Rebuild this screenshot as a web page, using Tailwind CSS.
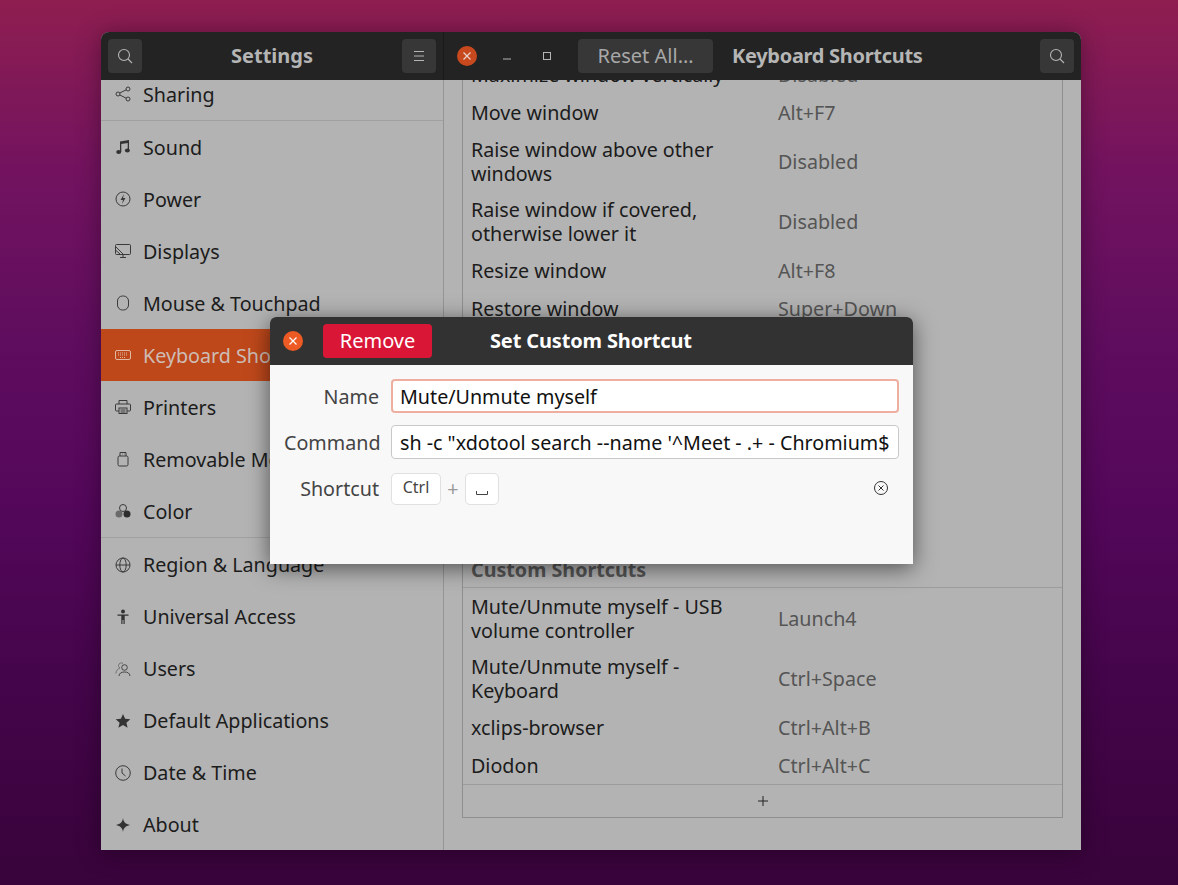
<!DOCTYPE html>
<html lang="en">
<head>
<meta charset="utf-8">
<title>Keyboard Shortcuts</title>
<script src="https://cdn.jsdelivr.net/npm/@tailwindcss/browser@4"></script>
</head>
<body class="m-0">
<div class="w-[1178px] h-[885px] overflow-hidden pt-[32px] pl-[101px] font-['Noto_Sans',sans-serif] text-[19.7px] leading-[24px] text-[#1c1c1c] bg-[linear-gradient(180deg,#8e1e50_0%,#73135f_19%,#5f0d5e_38%,#54075a_57%,#44054a_77%,#38033a_100%)]">
  <div class="relative w-[980px] h-[818px] rounded-t-[8px] flex flex-col bg-[#b3b3b3] shadow-[0_2px_24px_rgba(0,0,0,0.35)]">
    <!-- Header -->
    <header class="h-[48px] shrink-0 flex bg-[#232323] text-[#b5b5b5] z-10 rounded-t-[8px]">
      <div class="w-[343px] shrink-0 flex items-center justify-between px-[7px] border-r border-[#1a1a1a]">
        <button class="w-[34px] h-[34px] rounded-[4px] bg-[#373737] flex items-center justify-center">
          <svg width="16" height="16" viewBox="0 0 16 16" fill="none" stroke="#b5b5b5" stroke-width="1.1"><circle cx="7" cy="7" r="5.5"/><path d="M11 11l4 4"/></svg>
        </button>
        <span class="font-bold text-[20px]">Settings</span>
        <button class="w-[34px] h-[34px] rounded-[4px] bg-[#373737] flex items-center justify-center">
          <svg width="12" height="12" viewBox="0 0 12 12" stroke="#b5b5b5" stroke-width="1"><path d="M1 1.5h10M1 6h10M1 10.5h10"/></svg>
        </button>
      </div>
      <div class="flex-1 flex items-center pl-[13px] pr-[7px]">
        <span class="w-[20px] h-[20px] rounded-full bg-[#c9491e] flex items-center justify-center">
          <svg width="10" height="10" viewBox="0 0 10 10" stroke="#e8d5cc" stroke-width="1.2"><path d="M1.5 1.5l7 7M8.500 1.500l-7 7"/></svg>
        </span>
        <svg class="ml-[25px]" width="10" height="10" viewBox="0 0 10 10" stroke="#b5b5b5" stroke-width="1"><path d="M1 8h8"/></svg>
        <svg class="ml-[30px]" width="10" height="10" viewBox="0 0 10 10" fill="none" stroke="#b5b5b5" stroke-width="1"><rect x="1.5" y="1.5" width="7" height="7"/></svg>
        <button class="ml-[26px] w-[135px] h-[34px] rounded-[4px] bg-[#373737] text-[#a8a8a8] text-[20px] flex items-center justify-center">Reset All…</button>
        <span class="ml-[19px] font-bold text-[20px] tracking-[-0.3px]">Keyboard Shortcuts</span>
        <button class="ml-auto w-[34px] h-[34px] rounded-[4px] bg-[#373737] flex items-center justify-center">
          <svg width="16" height="16" viewBox="0 0 16 16" fill="none" stroke="#b5b5b5" stroke-width="1.1"><circle cx="7" cy="7" r="5.5"/><path d="M11 11l4 4"/></svg>
        </button>
      </div>
    </header>

    <div class="flex-1 flex min-h-0 overflow-hidden">
      <!-- Sidebar -->
      <nav class="w-[343px] shrink-0 border-r border-[#959595] overflow-hidden">
        <div class="h-[41px] flex items-center gap-[12px] pl-[14px] border-b border-[#a0a0a0]">
          <svg class="shrink-0 mt-[-12px]" width="16" height="16" viewBox="0 0 16 16" fill="none" stroke="#3a3a3a" stroke-width="1"><circle cx="3" cy="8" r="2"/><circle cx="13" cy="3" r="2"/><circle cx="13" cy="13" r="2"/><path d="M4.800 7l6.400-3.200M4.800 9l6.400 3.200"/></svg>
          <span class="mt-[-10px]">Sharing</span>
        </div>
        <div class="h-[52px] flex items-center gap-[12px] pl-[14px]">
          <svg class="shrink-0" width="16" height="16" viewBox="0 0 16 16" fill="#333"><path d="M5 2.500l9-1.500v10.500h-1.300V4L6.300 5.100V13H5z"/><ellipse cx="3.700" cy="13" rx="2.500" ry="1.900"/><ellipse cx="12.400" cy="11.500" rx="2.500" ry="1.900"/></svg>
          <span class="mt-[2px]">Sound</span>
        </div>
        <div class="h-[52px] flex items-center gap-[12px] pl-[14px]">
          <svg class="shrink-0" width="16" height="16" viewBox="0 0 16 16" fill="none" stroke="#3a3a3a" stroke-width="1"><circle cx="8" cy="8" r="7"/><path fill="#3a3a3a" stroke="none" d="M9 3L5.500 9H8l-1 4 3.500-6H8z"/></svg>
          <span class="mt-[2px]">Power</span>
        </div>
        <div class="h-[52px] flex items-center gap-[12px] pl-[14px]">
          <svg class="shrink-0" width="16" height="16" viewBox="0 0 16 16" fill="none" stroke="#3a3a3a" stroke-width="1"><rect x="0.500" y="1.500" width="15" height="10" rx="1"/><path d="M5 14.500h6M8 11.500v3M1 4l7 7M1 7.500l4 3.500"/></svg>
          <span class="mt-[2px]">Displays</span>
        </div>
        <div class="h-[52px] flex items-center gap-[12px] pl-[14px]">
          <svg class="shrink-0" width="16" height="16" viewBox="0 0 16 16" fill="none" stroke="#3a3a3a" stroke-width="1"><rect x="2.500" y="1" width="11" height="14" rx="5"/></svg>
          <span class="mt-[2px]">Mouse &amp; Touchpad</span>
        </div>
        <div class="h-[52px] flex items-center gap-[12px] pl-[14px] bg-[#bf481b] text-[#cdbdb5]">
          <svg class="shrink-0" width="16" height="16" viewBox="0 0 16 16" fill="none" stroke="#e0b9a5" stroke-width="1"><rect x="0.500" y="3.500" width="15" height="9" rx="1.500"/><path d="M3 6h10M3 8h10M5 10.500h6" stroke-dasharray="1 1"/></svg>
          <span class="whitespace-nowrap mt-[2px]">Keyboard Shortcuts</span>
        </div>
        <div class="h-[52px] flex items-center gap-[12px] pl-[14px]">
          <svg class="shrink-0" width="16" height="16" viewBox="0 0 16 16" fill="none" stroke="#3a3a3a" stroke-width="1"><path d="M4 5V1.500h8V5M4 12H1.500A1 1 0 0 1 .5 11V6a1 1 0 0 1 1-1h13a1 1 0 0 1 1 1v5a1 1 0 0 1-1 1H12"/><rect x="4" y="9" width="8" height="5.500"/><path d="M5.500 11h5M5.500 13h5"/></svg>
          <span class="mt-[2px]">Printers</span>
        </div>
        <div class="h-[52px] flex items-center gap-[12px] pl-[14px]">
          <svg class="shrink-0" width="16" height="16" viewBox="0 0 16 16" fill="none" stroke="#3a3a3a" stroke-width="1"><rect x="3" y="5" width="10" height="10" rx="1.500"/><path d="M5 5V1.500h6V5M7 3h.5M9 3h.5"/></svg>
          <span class="whitespace-nowrap mt-[2px]">Removable Media</span>
        </div>
        <div class="h-[53px] flex items-center gap-[12px] pl-[14px] border-b border-[#a0a0a0]">
          <svg class="shrink-0" width="16" height="16" viewBox="0 0 16 16"><circle cx="8" cy="5" r="3.500" fill="none" stroke="#3a3a3a"/><circle cx="4" cy="11" r="3.500" fill="#6a6a6a"/><circle cx="12" cy="11" r="3.500" fill="#2c2c2c"/></svg>
          <span class="mt-[2px]">Color</span>
        </div>
        <div class="h-[53px] flex items-center gap-[12px] pl-[14px]">
          <svg class="shrink-0" width="16" height="16" viewBox="0 0 16 16" fill="none" stroke="#3a3a3a" stroke-width="1"><circle cx="8" cy="8" r="7"/><ellipse cx="8" cy="8" rx="3.200" ry="7"/><path d="M1 8h14"/></svg>
          <span>Region &amp; Language</span>
        </div>
        <div class="h-[52px] flex items-center gap-[12px] pl-[14px]">
          <svg class="shrink-0" width="16" height="16" viewBox="0 0 16 16" fill="#333"><circle cx="8" cy="2.500" r="2"/><path d="M2.500 5.500h11v1.300H9.700V15H8.500v-4h-1v4H6.300V6.800H2.500z"/></svg>
          <span>Universal Access</span>
        </div>
        <div class="h-[52px] flex items-center gap-[12px] pl-[14px]">
          <svg class="shrink-0" width="16" height="16" viewBox="0 0 16 16" fill="none" stroke="#3a3a3a" stroke-width="0.900"><circle cx="9.500" cy="6.500" r="2.800"/><path d="M4 15c.3-2.800 2.300-4 5.500-4s5.200 1.200 5.500 4"/><path d="M8 2.500A2.800 2.800 0 0 0 3.500 4.500c0 1 .5 2 1.500 2.500C2.800 7.800 1.200 9.500.8 12.500" stroke="#6a6a6a"/></svg>
          <span>Users</span>
        </div>
        <div class="h-[52px] flex items-center gap-[12px] pl-[14px]">
          <svg class="shrink-0" width="16" height="16" viewBox="0 0 16 16" fill="#333"><path d="M8 1l2.100 4.800 5.200.5-3.900 3.400 1.200 5.100L8 12.100l-4.600 2.700 1.200-5.100L.7 6.300l5.200-.5z"/></svg>
          <span>Default Applications</span>
        </div>
        <div class="h-[52px] flex items-center gap-[12px] pl-[14px]">
          <svg class="shrink-0" width="16" height="16" viewBox="0 0 16 16" fill="none" stroke="#3a3a3a" stroke-width="1"><circle cx="8" cy="8" r="7.300"/><path d="M7 3.500V8l3.500 3"/></svg>
          <span>Date &amp; Time</span>
        </div>
        <div class="h-[52px] flex items-center gap-[12px] pl-[14px]">
          <svg class="shrink-0" width="16" height="16" viewBox="0 0 16 16" fill="#333"><path d="M8 1c.6 4 2.500 6 7 7-4.500 1-6.400 3-7 7-.6-4-2.500-6-7-7 4.500-1 6.400-3 7-7z"/></svg>
          <span>About</span>
        </div>
      </nav>

      <!-- Content -->
      <main class="flex-1 min-w-0 px-[18px] pb-[32px]">
        <div class="h-full border-x border-b border-[#8f8f8f] flex flex-col overflow-hidden pl-[8px]">
          <div class="h-[14px] overflow-hidden shrink-0">
            <div class="flex mt-[-17px]"><span class="w-[307px] whitespace-nowrap">Maximize window vertically</span><span class="text-[#555]">Disabled</span></div>
          </div>
          <div class="h-[38px] flex items-center shrink-0"><span class="w-[307px]">Move window</span><span class="text-[#555]">Alt+F7</span></div>
          <div class="h-[60px] flex items-center shrink-0"><span class="w-[307px] pr-[30px]">Raise window above other windows</span><span class="text-[#555]">Disabled</span></div>
          <div class="h-[60px] flex items-center shrink-0"><span class="w-[307px] pr-[30px]">Raise window if covered, otherwise lower it</span><span class="text-[#555]">Disabled</span></div>
          <div class="h-[38px] flex items-center shrink-0"><span class="w-[307px]">Resize window</span><span class="text-[#555]">Alt+F8</span></div>
          <div class="h-[38px] flex items-center shrink-0"><span class="w-[307px]">Restore window</span><span class="text-[#555]">Super+Down</span></div>
          <div class="h-[228px] shrink-0"></div>
          <div class="h-[32px] shrink-0 -ml-[8px] pl-[8px] flex items-end pb-[5px] border-b border-[#9c9c9c] font-bold text-[#555]">Custom Shortcuts</div>
          <div class="h-[61px] flex items-center shrink-0 pt-[1px]"><span class="w-[307px] pr-[30px]">Mute/Unmute myself - USB volume controller</span><span class="text-[#555]">Launch4</span></div>
          <div class="h-[60px] flex items-center shrink-0"><span class="w-[307px] pr-[30px]">Mute/Unmute myself - Keyboard</span><span class="text-[#555]">Ctrl+Space</span></div>
          <div class="h-[38px] flex items-center shrink-0"><span class="w-[307px]">xclips-browser</span><span class="text-[#555]">Ctrl+Alt+B</span></div>
          <div class="h-[37px] flex items-center shrink-0 pt-[1px]"><span class="w-[307px]">Diodon</span><span class="text-[#555]">Ctrl+Alt+C</span></div>
          <div class="flex-1 -ml-[8px] border-t border-[#9c9c9c] flex items-center justify-center">
            <svg width="12" height="12" viewBox="0 0 12 12" stroke="#222" stroke-width="1"><path d="M6 1v10M1 6h10"/></svg>
          </div>
        </div>
      </main>
    </div>

    <!-- Dialog -->
    <section class="absolute left-[169px] top-[285px] w-[643px] h-[247px] z-20 rounded-t-[6px] overflow-hidden bg-[#f8f8f8] shadow-[0_4px_22px_rgba(0,0,0,0.55)] flex flex-col">
      <div class="h-[48px] shrink-0 bg-[#323232] flex items-center pl-[13px]">
        <span class="w-[20px] h-[20px] rounded-full bg-[#ed5a24] flex items-center justify-center">
          <svg width="10" height="10" viewBox="0 0 10 10" stroke="#fff" stroke-width="1.2"><path d="M1.500 1.500l7 7M8.500 1.500l-7 7"/></svg>
        </span>
        <button class="ml-[20px] w-[109px] h-[34px] rounded-[4px] bg-[#da1636] text-white text-[20px] flex items-center justify-center">Remove</button>
        <span class="ml-[58px] text-white font-bold text-[20px] tracking-[-0.15px]">Set Custom Shortcut</span>
      </div>
      <div class="flex-1 pt-[14px] pl-[14px] pr-[14px] text-[#444]">
        <div class="flex items-center h-[34px]">
          <span class="w-[95px] text-right whitespace-nowrap mt-[2px]">Name</span>
          <span class="ml-[12px] w-[508px] h-[34px] rounded-[4px] border-2 border-[#eeaea0] bg-white text-[#111] flex items-center pl-[7px] pt-[2px]">Mute/Unmute myself</span>
        </div>
        <div class="flex items-center h-[34px] mt-[12px]">
          <span class="w-[95px] text-right whitespace-nowrap mt-[2px]">Command</span>
          <span class="ml-[12px] w-[508px] h-[34px] rounded-[4px] border border-[#c8c8c8] bg-white text-[#111] flex items-center pl-[8px] pt-[2px] overflow-hidden whitespace-nowrap">sh -c "xdotool search --name '^Meet - .+ - Chromium$</span>
        </div>
        <div class="flex items-center h-[32px] mt-[14px]">
          <span class="w-[95px] text-right whitespace-nowrap">Shortcut</span>
          <span class="ml-[12px] w-[50px] h-[32px] rounded-[5px] border border-[#e0e0e0] bg-white text-[16px] flex items-center justify-center pb-[4px]">Ctrl</span>
          <span class="w-[24px] text-center text-[#999]">+</span>
          <span class="w-[34px] h-[32px] rounded-[5px] border border-[#e0e0e0] bg-white flex items-center justify-center pt-[8px]">
            <svg width="14" height="6" viewBox="0 0 14 6" fill="none" stroke="#444" stroke-width="1"><path d="M1.500 1v3.500h11V1"/></svg>
          </span>
          <svg class="ml-auto mr-[10px] mt-[-2px]" width="16" height="16" viewBox="0 0 16 16" fill="none" stroke="#333" stroke-width="1"><circle cx="8" cy="8" r="6.500"/><path d="M5.500 5.500l5 5M10.500 5.500l-5 5"/></svg>
        </div>
      </div>
    </section>
  </div>
</div>
</body>
</html>
